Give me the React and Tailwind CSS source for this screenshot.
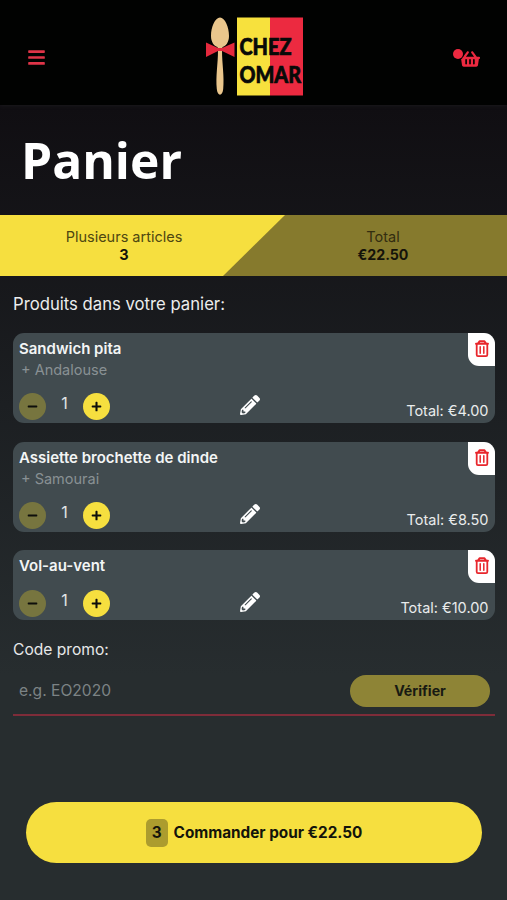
import { FaBars, FaMinus, FaPencilAlt, FaPlus, FaShoppingBasket } from 'react-icons/fa'

const products = [
  { id: 1, name: 'Sandwich pita', extra: '+ Andalouse', quantity: 1, total: '€4.00' },
  { id: 2, name: 'Assiette brochette de dinde', extra: '+ Samourai', quantity: 1, total: '€8.50' },
  { id: 3, name: 'Vol-au-vent', quantity: 1, total: '€10.00' },
]

function Logo() {
  return (
    <svg width="100" height="80" viewBox="0 0 100 80" className="block overflow-visible">
      <rect x="33" y="1.500" width="33" height="78" fill="#f7e13d" />
      <rect x="66" y="1.500" width="33" height="78" fill="#ec2a40" />
      <path d="M16 1.500C21 1.500 25 11 25 20C25 26 22 30 18.500 31L18 34C18 48 20.500 60 19.200 73C18.500 80.500 13.500 80.500 12.800 73C11.500 60 14 48 14 34L13.500 31C10 30 7 26 7 20C7 11 11 1.500 16 1.500Z" fill="#eac68c" />
      <path d="M2 26.500L14 32H18L30.500 26.500V41L18 35H14L2 41Z" fill="#e4293d" />
      <g fill="#080a08" stroke="#080a08" strokeWidth="0.700" fontFamily="Lato, Noto Sans, sans-serif" fontWeight="900" fontSize="23">
        <text x="35.500" y="38.700" textLength="52" lengthAdjust="spacingAndGlyphs">CHEZ</text>
        <text x="35.500" y="67" textLength="61.500" lengthAdjust="spacingAndGlyphs">OMAR</text>
      </g>
    </svg>
  )
}

function TrashIcon() {
  return (
    <svg width="14" height="17" viewBox="0 0 14 17" fill="none" stroke="currentColor" strokeLinejoin="round" strokeLinecap="round" className="-translate-y-px">
      <path d="M1 3.800H13M3.200 3.100L4.700 1.200H9.300L10.800 3.100" strokeWidth="1.900" />
      <path d="M1.700 4V14.700C1.700 15.600 2.200 16.100 3 16.100H11C11.800 16.100 12.300 15.600 12.300 14.700V4" strokeWidth="1.800" />
      <path d="M5.200 6.700V13.200M8.800 6.700V13.200" strokeWidth="1.500" />
    </svg>
  )
}

function ProductCard({ product }) {
  return (
    <article className={`relative flex flex-col justify-between rounded-[11px] bg-[#414b4f] ${product.extra ? 'h-[90px]' : 'h-[70px]'}`}>
      <div className="pt-[5px] pl-1.5">
        <h2 className="text-[15px] leading-[21px] font-semibold text-[#f3f5f5]">{product.name}</h2>
        {product.extra && <p className="pl-0.5 text-[14.5px] leading-[21px] text-[#899194]">{product.extra}</p>}
      </div>
      <div className="grid grid-cols-[221px_20px_1fr] pr-[6.5px] pl-1.5">
        <div className="flex h-[31px] items-start pt-px">
          <button className="flex size-[27px] items-center justify-center rounded-full bg-[#77753f] text-[#0d0e0b]">
            <FaMinus size={11} />
          </button>
          <span className="w-[37px] text-center text-base leading-[21px] text-[#e2e5e6]">{product.quantity}</span>
          <button className="flex size-[27px] items-center justify-center rounded-full bg-[#f6df3f] text-[#0d0e0b]">
            <FaPlus size={11} />
          </button>
        </div>
        <button className="flex h-[26px] items-center justify-center text-white">
          <FaPencilAlt size={20} />
        </button>
        <p className="pt-[9px] text-right text-[14.5px] leading-5 text-[#e9ecec]">Total: {product.total}</p>
      </div>
      <button className="absolute top-0 right-0 flex h-[33px] w-[27px] items-center justify-center rounded-tr-[11px] rounded-bl-[11px] bg-white text-[#e8262c]">
        <TrashIcon />
      </button>
    </article>
  )
}

export default function App() {
  return (
    <div className="flex h-[900px] w-full flex-col overflow-hidden bg-linear-to-b from-[#100e12] from-12% via-[#1c1f22] via-45% to-[#272d2f] to-75% font-['Inter',sans-serif]">
      <header className="flex h-[105px] shrink-0 items-start justify-between bg-[#010201] pr-[27px] pl-[27px] shadow-[0_1px_3px_#1a181c]">
        <button className="mt-12 w-[54px] text-[#df3448]">
          <FaBars size={19} />
        </button>
        <div className="mt-4">
          <Logo />
        </div>
        <button className="relative mt-[49px] flex w-[54px] justify-end text-[#ed2940]">
          <FaShoppingBasket size={20} />
          <span className="absolute top-0 right-[17px] size-[10px] rounded-full bg-[#ed2940] ring-1 ring-[#010201]" />
        </button>
      </header>

      <h1 className="h-[110px] shrink-0 pt-[21px] pl-[21px] font-['Open_Sans',sans-serif] text-[49.700px] leading-[68px] font-bold text-white">
        Panier
      </h1>

      <section className="relative grid h-[61px] shrink-0 grid-cols-[248px_1fr] bg-[#867a2d] text-center text-[14.5px] leading-[18.5px]">
        <div className="absolute inset-y-0 left-0 w-[285px] bg-[#f6df3f] [clip-path:polygon(0_0,100%_0,223px_100%,0_100%)]" />
        <div className="relative pt-[12.5px]">
          <p className="text-[#4e4711]">Plusieurs articles</p>
          <p className="font-bold text-[#14130a]">3</p>
        </div>
        <div className="relative pt-[12.5px] pl-[11px]">
          <p className="text-[#332d10]">Total</p>
          <p className="text-[14.200px] font-bold text-[#14130a]">€22.50</p>
        </div>
      </section>

      <main className="px-[13px] pr-3">
        <p className="pt-4 text-[16.700px] leading-6 text-[#eceded]">Produits dans votre panier:</p>
        <div className="mt-[17px] flex flex-col gap-[18.5px]">
          {products.map((product) => (
            <ProductCard key={product.id} product={product} />
          ))}
        </div>
        <p className="mt-[18px] text-[15.600px] leading-6 text-[#e6e8e9]">Code promo:</p>
        <div className="mt-[13px] flex h-[41px] items-start justify-between border-b-2 border-[#7e2c39] pr-[5px] pl-1.5">
          <span className="text-[15.600px] leading-8 text-[#7c8385]">e.g. EO2020</span>
          <button className="h-8 w-[140px] rounded-full bg-[#8e8436] text-[14.200px] font-bold text-[#181a12]">Vérifier</button>
        </div>
      </main>

      <button className="mr-[25px] ml-[26px] mt-[86px] flex h-[61px] shrink-0 items-center justify-center gap-1.5 rounded-full bg-[#f6df3f] pt-px text-[15.300px] font-bold text-[#13140b]">
        <span className="flex h-7 w-[22px] items-center justify-center rounded-[5px] bg-[#ac9c2e]">3</span>
        Commander pour €22.50
      </button>
    </div>
  )
}
